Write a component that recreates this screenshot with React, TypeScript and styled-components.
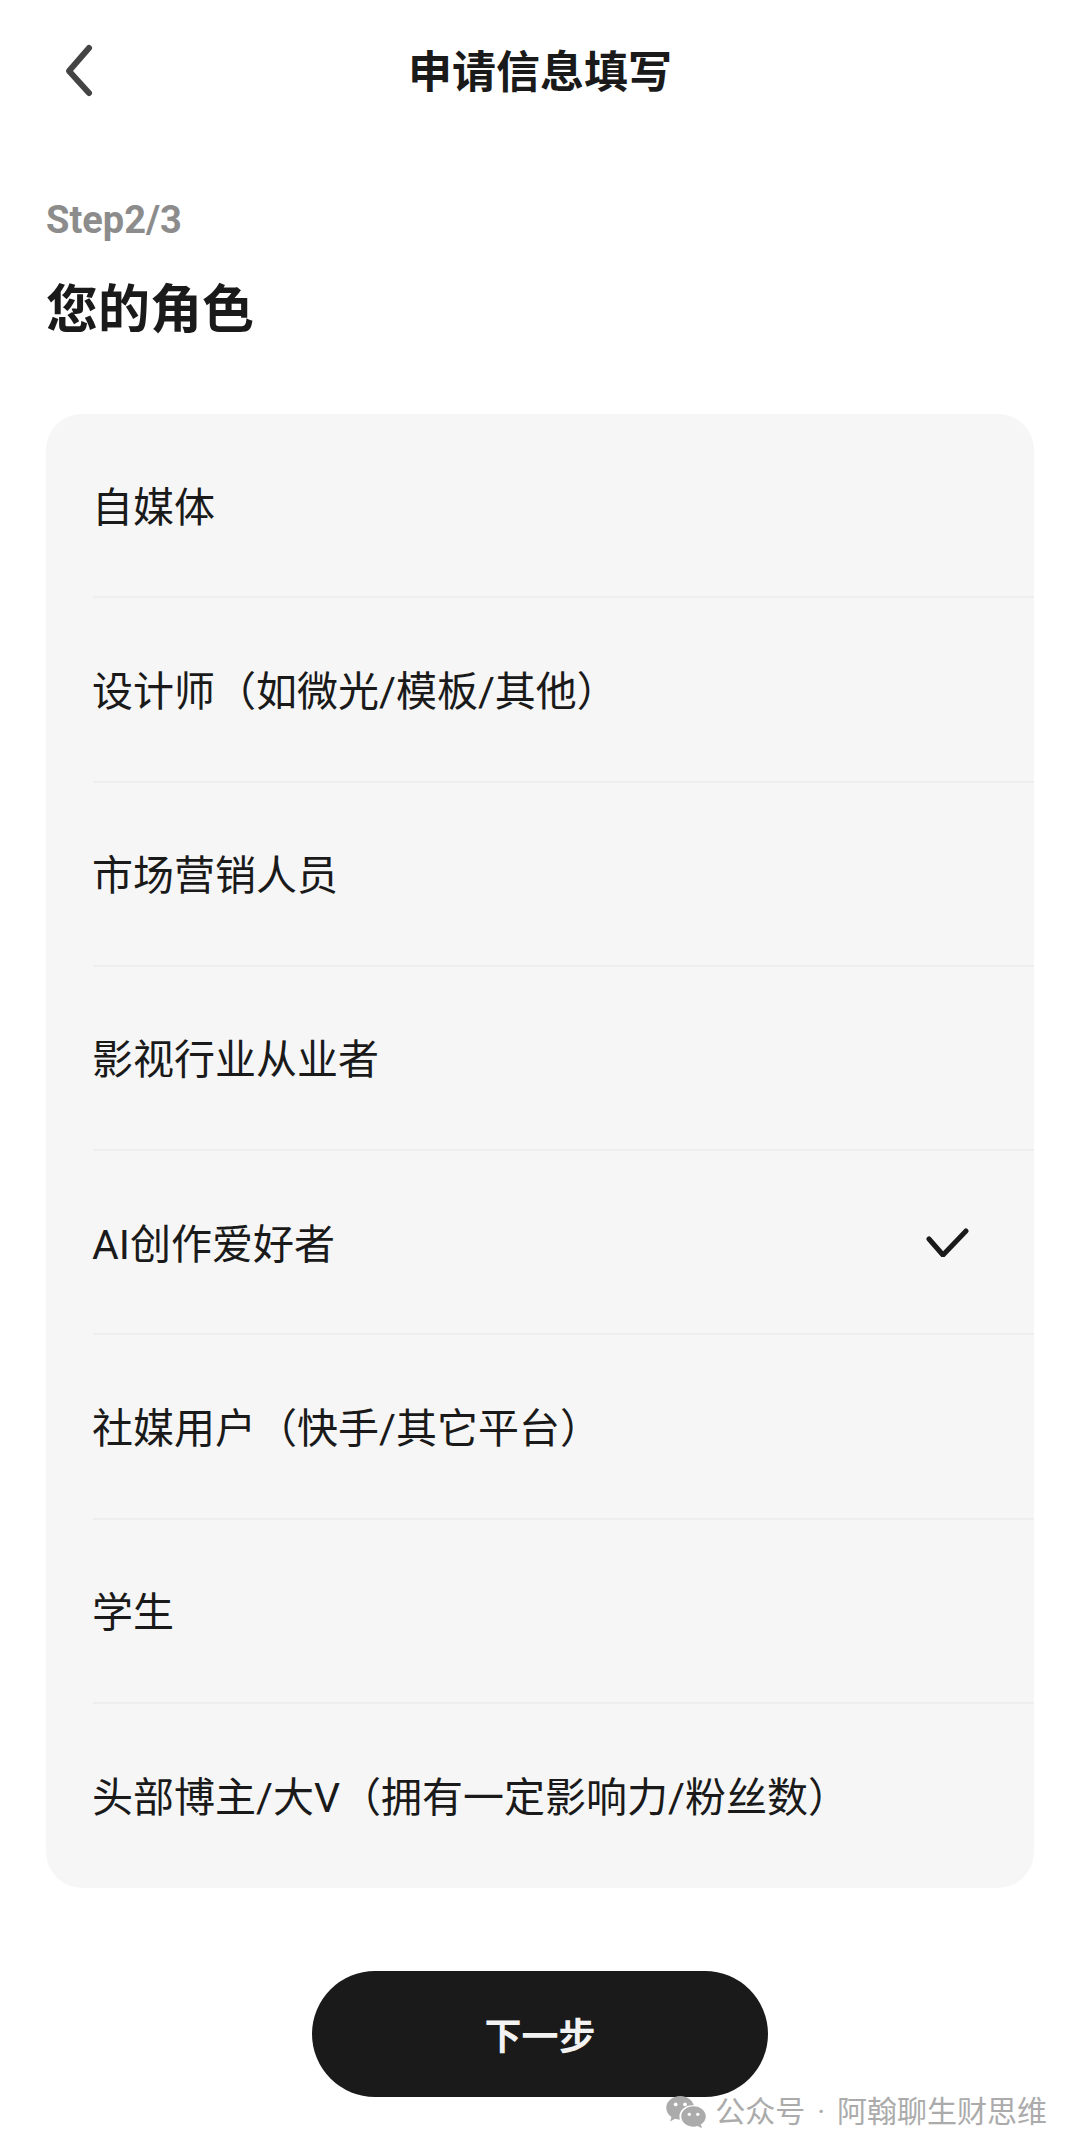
import * as React from 'react'
import styled, { createGlobalStyle } from 'styled-components'

const GlobalStyle = createGlobalStyle`
  html, body {
    margin: 0;
    padding: 0;
    background: #fff;
  }
  * {
    box-sizing: border-box;
  }
`

const Page = styled.div`
  position: relative;
  width: 1080px;
  height: 2155px;
  overflow: hidden;
  background: #fff;
  color: #1a1a1a;
  font-family: Roboto, "Noto Sans CJK SC", sans-serif;
`

const Header = styled.header`
  position: relative;
  height: 142px;
  padding-top: 3px;
  display: flex;
  align-items: center;
  justify-content: center;
`

const BackButton = styled.button`
  position: absolute;
  left: 60px;
  top: 40px;
  width: 40px;
  height: 60px;
  padding: 0;
  border: 0;
  background: none;
  display: flex;
`

const Title = styled.h1`
  margin: 0;
  font-size: 44px;
  line-height: 60px;
  font-weight: 700;
`

const Intro = styled.div`
  padding: 54px 46px 0;
  display: flex;
  flex-direction: column;
  gap: 32px;
`

const Step = styled.div`
  font-size: 38px;
  line-height: 48px;
  font-weight: 700;
  color: #8c8c8c;
`

const Heading = styled.h2`
  margin: 0;
  font-size: 52px;
  line-height: 70px;
  font-weight: 700;
`

const Card = styled.ul`
  list-style: none;
  margin: 68px 46px 0;
  padding: 0;
  width: 988px;
  height: 1474px;
  background: #f6f6f6;
  border-radius: 36px;
  display: grid;
  grid-template-rows: repeat(8, 1fr);
`

const Row = styled.li`
  margin-left: 47px;
  padding: 0 64px 3px 0;
  display: flex;
  align-items: center;
  justify-content: space-between;
  font-size: 41px;
  border-bottom: 2px solid #eeeeee;

  &:last-child {
    border-bottom: 0;
  }
`

const RoleName = styled.span`
  margin-left: -1px;
`

const Footer = styled.div`
  display: flex;
  justify-content: center;
  margin-top: 83px;
`

const NextButton = styled.button`
  width: 456px;
  height: 126px;
  border: 0;
  border-radius: 63px;
  background: #1a1a1a;
  color: #f2f2f2;
  font-family: inherit;
  font-size: 37px;
  font-weight: 700;
`

const Watermark = styled.div`
  position: absolute;
  right: 33px;
  top: 2091px;
  display: flex;
  align-items: center;
  gap: 9px;
  font-size: 30px;
  line-height: 42px;
  color: #ababab;
`

const Dot = styled.span`
  margin: 0 12px;
`

const roles = [
  '自媒体',
  '设计师（如微光/模板/其他）',
  '市场营销人员',
  '影视行业从业者',
  'AI创作爱好者',
  '社媒用户（快手/其它平台）',
  '学生',
  '头部博主/大V（拥有一定影响力/粉丝数）',
]

const selected = 'AI创作爱好者'

const App = () => (
  <Page>
    <GlobalStyle />
    <Header>
      <BackButton aria-label="返回">
        <svg width="40" height="60" viewBox="0 0 40 60" fill="none">
          <path d="M29 8 L9 31 L29 53" stroke="#444" strokeWidth="6" strokeLinecap="round" strokeLinejoin="round" />
        </svg>
      </BackButton>
      <Title>申请信息填写</Title>
    </Header>
    <Intro>
      <Step>Step2/3</Step>
      <Heading>您的角色</Heading>
    </Intro>
    <Card>
      {roles.map((role) => (
        <Row key={role}>
          <RoleName>{role}</RoleName>
          {role === selected && (
            <svg width="44" height="32" viewBox="0 -2 44 32" fill="none">
              <path d="M3 12 L17 28 L40 4" stroke="#1a1a1a" strokeWidth="5" strokeLinecap="round" strokeLinejoin="round" />
            </svg>
          )}
        </Row>
      ))}
    </Card>
    <Footer>
      <NextButton>下一步</NextButton>
    </Footer>
    <Watermark>
      <svg width="40" height="32" viewBox="0 0 42 34" fill="#ababab">
        <path d="M15 0C6.7 0 0 5.6 0 12.6c0 4 2.2 7.5 5.6 9.8L4 27l5.4-2.7c1.6.5 3.3.8 5.1.9-.3-1.1-.5-2.2-.5-3.3C14 15 20.3 9.8 28 9.8c.5 0 .9 0 1.4.1C27.6 4.2 21.900 0 15 0z" />
        <path d="M42 21.800C42 15.800 36.200 11 29 11s-13 4.800-13 10.800S21.800 32.600 29 32.600c1.500 0 3-.2 4.300-.6L38 34.300l-1.300-4C40 28.300 42 25.200 42 21.800z" />
        <circle cx="10" cy="9" r="2" fill="#fff" />
        <circle cx="20" cy="9" r="2" fill="#fff" />
        <circle cx="24.500" cy="19.500" r="1.800" fill="#fff" />
        <circle cx="33.500" cy="19.500" r="1.800" fill="#fff" />
      </svg>
      <span>
        公众号<Dot>·</Dot>阿翰聊生财思维
      </span>
    </Watermark>
  </Page>
)

export default App
